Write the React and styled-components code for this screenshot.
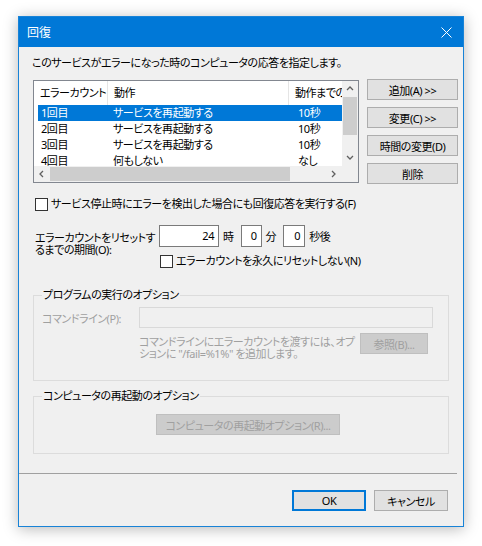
import styled, { createGlobalStyle } from 'styled-components';

const GlobalStyle = createGlobalStyle`
  body {
    margin: 0;
    background: #ffffff;
    font-family: "Noto Sans", "Noto Sans CJK JP", sans-serif;
    font-size: 11px;
    letter-spacing: -0.45px;
    font-feature-settings: "palt";
    color: #000;
  }
`;

const rows = [
    { count: '1回目', action: 'サービスを再起動する', delay: '10秒', selected: true },
    { count: '2回目', action: 'サービスを再起動する', delay: '10秒' },
    { count: '3回目', action: 'サービスを再起動する', delay: '10秒' },
    { count: '4回目', action: '何もしない', delay: 'なし' },
];

function Chevron({ dir }) {
    const paths = {
        up: 'M1 5 L4 2 L7 5',
        down: 'M1 2 L4 5 L7 2',
        left: 'M5 1 L2 4 L5 7',
        right: 'M2 1 L5 4 L2 7',
    };
    return (
        <svg width="8" height="8" viewBox="0 0 8 8">
            <path d={paths[dir]} fill="none" stroke="#606060" strokeWidth="1.3" />
        </svg>
    );
}

export default function App() {
    return (
        <Page>
            <GlobalStyle />
            <Window>
                <TitleBar>
                    <span>回復</span>
                    <Close>
                        <svg width="11" height="11" viewBox="0 0 11 11">
                            <path d="M0.5 0.5 L10.5 10.5 M10.5 0.5 L0.5 10.5" stroke="#fff" strokeWidth="1" />
                        </svg>
                    </Close>
                </TitleBar>
                <Body>
                    <Description>このサービスがエラーになった時のコンピュータの応答を指定します。</Description>
                    <TopRow>
                        <ListBox>
                            <ListContent>
                                <Header>
                                    <HeadCell width={74}>エラーカウント</HeadCell>
                                    <HeadCell width={181}>動作</HeadCell>
                                    <HeadCell width={60}>動作までの時間</HeadCell>
                                </Header>
                                {rows.map((r) => (
                                    <Row key={r.count} selected={r.selected}>
                                        <Cell width={72}>{r.count}</Cell>
                                        <Cell width={185}>{r.action}</Cell>
                                        <DelayCell>{r.delay}</DelayCell>
                                    </Row>
                                ))}
                            </ListContent>
                            <VScroll>
                                <Arrow><Chevron dir="up" /></Arrow>
                                <VTrack><VThumb /></VTrack>
                                <Arrow><Chevron dir="down" /></Arrow>
                            </VScroll>
                            <HScroll>
                                <Arrow><Chevron dir="left" /></Arrow>
                                <HTrack><HThumb /></HTrack>
                                <Arrow><Chevron dir="right" /></Arrow>
                            </HScroll>
                            <Corner />
                        </ListBox>
                        <SideButtons>
                            <Button>追加(A) &gt;&gt;</Button>
                            <Button>変更(C) &gt;&gt;</Button>
                            <Button>時間の変更(D)</Button>
                            <Button>削除</Button>
                        </SideButtons>
                    </TopRow>

                    <CheckRow>
                        <Box />
                        <span>サービス停止時にエラーを検出した場合にも回復応答を実行する(F)</span>
                    </CheckRow>

                    <ResetSection>
                        <ResetLabel>エラーカウントをリセットす<br />るまでの期間(O):</ResetLabel>
                        <ResetControls>
                            <TimeRow>
                                <NumInput width={60}>24</NumInput>
                                <Unit>時</Unit>
                                <NumInput width={21}>0</NumInput>
                                <Unit>分</Unit>
                                <NumInput width={22}>0</NumInput>
                                <Unit>秒後</Unit>
                            </TimeRow>
                            <CheckRow2>
                                <Box />
                                <span>エラーカウントを永久にリセットしない(N)</span>
                            </CheckRow2>
                        </ResetControls>
                    </ResetSection>

                    <Group height={94}>
                        <Legend>プログラムの実行のオプション</Legend>
                        <CommandRow>
                            <DisabledLabel>コマンドライン(P):</DisabledLabel>
                            <DisabledInput />
                        </CommandRow>
                        <HelpRow>
                            <HelpText>コマンドラインにエラーカウントを渡すには、オプ<br />ションに "/fail=%1%" を追加します。</HelpText>
                            <DisabledButton width={68}>参照(B)...</DisabledButton>
                        </HelpRow>
                    </Group>

                    <Group height={66} $gap={7}>
                        <Legend>コンピュータの再起動のオプション</Legend>
                        <Centered>
                            <DisabledButton width={184}>コンピュータの再起動オプション(R)...</DisabledButton>
                        </Centered>
                    </Group>
                </Body>
                <Separator />
                <Footer>
                    <Button width={74} primary>OK</Button>
                    <Button width={74}>キャンセル</Button>
                </Footer>
            </Window>
        </Page>
    );
}

const Page = styled.div`
    padding: 16px 0 0 18px;
    min-height: 530px;
`;

const Window = styled.div`
    width: 444px;
    height: 509px;
    border: 1px solid #1883d7;
    background: #f0f0f0;
    box-shadow: 0 2px 14px rgba(0, 0, 0, 0.28);
    display: flex;
    flex-direction: column;
`;

const TitleBar = styled.div`
    height: 30px;
    background: #0078d7;
    color: #fff;
    display: flex;
    align-items: center;
    justify-content: space-between;
    padding: 0 10px 0 8px;
    font-size: 12px;
    letter-spacing: 0;
`;

const Close = styled.div`
    display: flex;
    align-items: center;
    margin-right: 1px;
`;

const Body = styled.div`
    padding: 8px 0 0 14px;
    display: flex;
    flex-direction: column;
    white-space: nowrap;
`;

const Description = styled.div`
    line-height: 16px;
    margin-left: -1px;
`;

const TopRow = styled.div`
    display: flex;
    align-items: flex-start;
    margin-top: 9px;
    gap: 8px;
`;

const ListBox = styled.div`
    width: 324px;
    height: 101px;
    border: 1px solid #828790;
    background: #fff;
    display: grid;
    grid-template-columns: 1fr 16px;
    grid-template-rows: 1fr 16px;
`;

const ListContent = styled.div`
    overflow: hidden;
    white-space: nowrap;
`;

const Header = styled.div`
    display: flex;
    height: 24px;
`;

const HeadCell = styled.div`
    flex: 0 0 ${p => p.width}px;
    padding-left: 6px;
    line-height: 24px;
    border-right: 1px solid #e5e5e5;
    box-sizing: border-box;
    overflow: hidden;
`;

const Row = styled.div`
    display: flex;
    height: 16px;
    line-height: 16px;
    margin-left: 4px;
    background: ${p => (p.selected ? '#0078d7' : 'transparent')};
    color: ${p => (p.selected ? '#fff' : '#000')};
`;

const Cell = styled.div`
    flex: 0 0 ${p => p.width}px;
    padding-left: 3px;
    box-sizing: border-box;
`;

const DelayCell = styled.div`
    flex: 0 0 50px;
    padding-left: 3px;
`;

const VScroll = styled.div`
    background: #f0f0f0;
    display: flex;
    flex-direction: column;
`;

const Arrow = styled.div`
    flex: 0 0 16px;
    height: 16px;
    display: flex;
    align-items: center;
    justify-content: center;
`;

const VTrack = styled.div`
    flex: 1;
    padding: 0 1px;
`;

const VThumb = styled.div`
    height: 38px;
    background: #cdcdcd;
`;

const HScroll = styled.div`
    background: #f0f0f0;
    display: flex;
`;

const HTrack = styled.div`
    flex: 1;
    padding: 1px 0;
`;

const HThumb = styled.div`
    width: 240px;
    height: 100%;
    background: #cdcdcd;
`;

const Corner = styled.div`
    background: #f0f0f0;
`;

const SideButtons = styled.div`
    display: flex;
    flex-direction: column;
    gap: 7px;
    margin-top: -1px;
`;

const Button = styled.div`
    box-sizing: border-box;
    width: ${p => p.width || 91}px;
    height: 21px;
    border: ${p => (p.primary ? '2px solid #0078d7' : '1px solid #adadad')};
    background: #e1e1e1;
    display: flex;
    align-items: center;
    justify-content: center;
`;

const CheckRow = styled.div`
    display: flex;
    align-items: center;
    gap: 3px;
    margin-top: 12px;
    margin-left: 2px;
    line-height: 16px;
`;

const Box = styled.div`
    width: 11px;
    height: 11px;
    border: 1px solid #333;
    background: #fff;
`;

const ResetSection = styled.div`
    display: flex;
    margin-top: 13px;
    margin-left: 2px;
`;

const ResetLabel = styled.div`
    width: 124px;
    line-height: 12px;
    padding-top: 7px;
`;

const ResetControls = styled.div`
    display: flex;
    flex-direction: column;
`;

const TimeRow = styled.div`
    display: flex;
    align-items: center;
`;

const NumInput = styled.div`
    width: ${p => p.width - 6}px;
    height: 20px;
    border: 1px solid #7a7a7a;
    background: #fff;
    text-align: right;
    padding-right: 4px;
    line-height: 20px;
`;

const Unit = styled.span`
    margin: 0 7px 0 4px;
`;

const CheckRow2 = styled(CheckRow)`
    margin-top: 6px;
    margin-left: 1px;
`;

const Group = styled.fieldset`
    width: 416px;
    height: ${p => p.height}px;
    margin: ${p => p.$gap || 18}px 0 0 0;
    padding: 0 0 0 8px;
    border: 1px solid #dcdcdc;
    box-sizing: border-box;
    min-inline-size: 0;
`;

const Legend = styled.legend`
    padding: 0 1px;
    margin-left: 0;
    line-height: 16px;
`;

const CommandRow = styled.div`
    display: flex;
    align-items: center;
    margin-top: 4px;
`;

const DisabledLabel = styled.span`
    color: #a0a0a0;
    width: 97px;
`;

const DisabledInput = styled.div`
    width: 292px;
    height: 19px;
    border: 1px solid #d9d9d9;
    background: #f0f0f0;
`;

const HelpRow = styled.div`
    display: flex;
    margin-top: 5px;
    margin-left: 97px;
    gap: 12px;
`;

const HelpText = styled.div`
    color: #a0a0a0;
    line-height: 12px;
    padding-top: 3px;
    width: 209px;
`;

const DisabledButton = styled.div`
    box-sizing: border-box;
    width: ${p => p.width}px;
    height: 21px;
    border: 1px solid #bfbfbf;
    background: #cccccc;
    color: #a0a0a0;
    display: flex;
    align-items: center;
    justify-content: center;
`;

const Centered = styled.div`
    display: flex;
    margin-top: 10px;
    margin-left: 114px;
`;

const Separator = styled.div`
    height: 1px;
    width: 438px;
    background: #a0a0a0;
    margin-top: 19px;
`;

const Footer = styled.div`
    display: flex;
    justify-content: flex-end;
    gap: 8px;
    padding: 16px 15px 0 0;
`;
